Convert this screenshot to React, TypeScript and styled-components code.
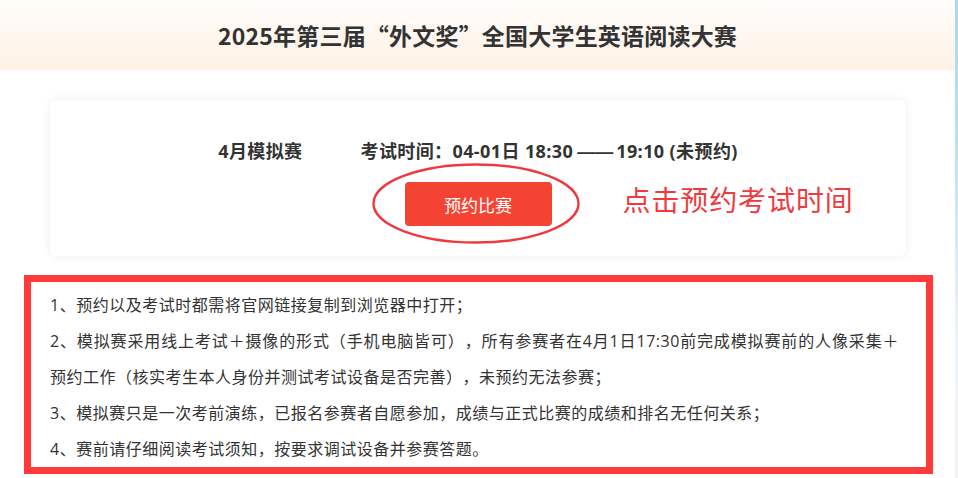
import React from 'react';
import styled, { createGlobalStyle } from 'styled-components';

const GlobalStyle = createGlobalStyle`
  html, body {
    margin: 0;
    padding: 0;
    background: #ffffff;
  }

  body {
    font-family: "Noto Sans CJK SC", "Noto Sans", sans-serif;
    color: #333333;
    text-spacing-trim: space-all;
  }
`;

const Page = styled.div`
  display: flex;
  width: 958px;
  height: 478px;
  overflow: hidden;
`;

const Main = styled.div`
  width: 955px;
  display: flex;
  flex-direction: column;
`;

const SideStrip = styled.div`
  width: 3px;
  background: linear-gradient(180deg, #a4dcee 0%, #b9e3f0 30%, #eef3f7 70%, #f2f5f8 100%);
`;

const Header = styled.header`
  height: 70px;
  display: flex;
  align-items: center;
  justify-content: center;
  border-top-right-radius: 6px;
  background: linear-gradient(180deg, #fffdfb 0%, #fdf1e5 100%);
`;

const Title = styled.h1`
  margin: 0;
  font-size: 23px;
  font-weight: 700;
  color: #333333;
  letter-spacing: 0.2px;
`;

const Card = styled.section`
  margin: 30px 49px 0 50px;
  height: 156px;
  box-sizing: border-box;
  padding-top: 38px;
  border-radius: 6px;
  background: #ffffff;
  box-shadow: 0 0 10px rgba(0, 0, 0, 0.07);
  display: flex;
  flex-direction: column;
  align-items: center;
`;

const InfoRow = styled.div`
  display: flex;
  align-items: center;
  gap: 58px;
  height: 24px;
  font-family: "Open Sans", "Noto Sans CJK SC", sans-serif;
  font-size: 18px;
  font-weight: 700;
  letter-spacing: 0.4px;
  color: #333333;
`;

const Dash = styled.span`
  font-family: "Liberation Sans", sans-serif;
  letter-spacing: 0;
  margin: 0 3px 0 4px;
`;

const ButtonWrap = styled.div`
  position: relative;
  margin-top: 20px;
`;

const ReserveButton = styled.button`
  width: 147px;
  height: 44px;
  border: none;
  border-radius: 4px;
  background: #f44332;
  color: #ffffff;
  font-family: "Noto Sans CJK SC", sans-serif;
  font-size: 17px;
  cursor: pointer;
`;

const Circle = styled.svg`
  position: absolute;
  left: -33px;
  top: -19px;
  pointer-events: none;
`;

const Hint = styled.span`
  position: absolute;
  left: 218px;
  top: -3px;
  white-space: nowrap;
  font-family: "Noto Sans CJK SC", sans-serif;
  font-size: 28px;
  line-height: 40px;
  letter-spacing: 0.9px;
  color: #f03a3e;
`;

const NoticeBox = styled.div`
  margin: 19px 0 0 24px;
  width: 909px;
  box-sizing: border-box;
  border: 7px solid #ff3a3a;
  padding: 5px 27px 0 19px;
`;

const NoticeLine = styled.p<{ $stretch?: boolean }>`
  margin: 0;
  font-family: "Open Sans", "Noto Sans CJK SC", sans-serif;
  font-size: 16px;
  letter-spacing: 0.5px;
  line-height: 36px;
  color: #333333;
  white-space: nowrap;
  text-align: ${({ $stretch }) => ($stretch ? 'justify' : 'left')};
  text-align-last: ${({ $stretch }) => ($stretch ? 'justify' : 'auto')};
`;

const notices: { text: string; stretch?: boolean }[] = [
  { text: '1、预约以及考试时都需将官网链接复制到浏览器中打开；' },
  {
    text: '2、模拟赛采用线上考试＋摄像的形式（手机电脑皆可），所有参赛者在4月1日17:30前完成模拟赛前的人像采集＋',
    stretch: true,
  },
  { text: '预约工作（核实考生本人身份并测试考试设备是否完善），未预约无法参赛；' },
  { text: '3、模拟赛只是一次考前演练，已报名参赛者自愿参加，成绩与正式比赛的成绩和排名无任何关系；' },
  { text: '4、赛前请仔细阅读考试须知，按要求调试设备并参赛答题。' },
];

export default function App(): React.ReactElement {
  return (
    <Page>
      <GlobalStyle />
      <Main>
        <Header>
          <Title>2025年第三届“外文奖”全国大学生英语阅读大赛</Title>
        </Header>

        <Card>
          <InfoRow>
            <span>4月模拟赛</span>
            <span>
              考试时间：04-01日 18:30<Dash>——</Dash>19:10 (未预约)
            </span>
          </InfoRow>
          <ButtonWrap>
            <ReserveButton type='button'>预约比赛</ReserveButton>
            <Circle width='208' height='81' viewBox='0 0 208 81'>
              <ellipse cx='104' cy='40.5' rx='102.5' ry='39' fill='none' stroke='#ee3a3f' strokeWidth='2.4' />
            </Circle>
            <Hint>点击预约考试时间</Hint>
          </ButtonWrap>
        </Card>

        <NoticeBox>
          {notices.map((item, i) => (
            <NoticeLine key={i} $stretch={item.stretch}>
              {item.text}
            </NoticeLine>
          ))}
        </NoticeBox>
      </Main>
      <SideStrip />
    </Page>
  );
}
